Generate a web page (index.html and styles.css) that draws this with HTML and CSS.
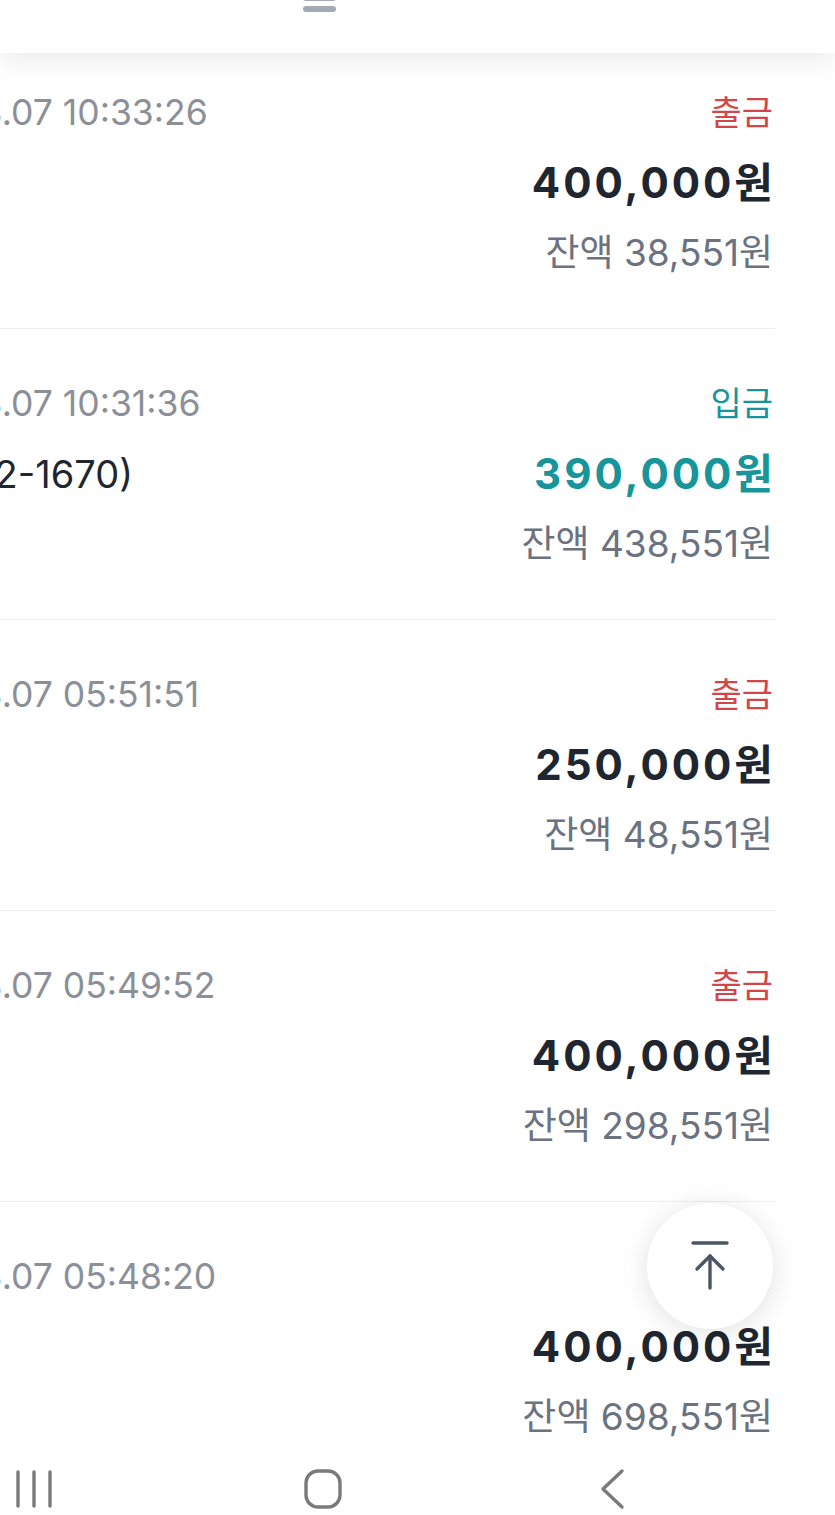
FILE: index.html
```html
<!DOCTYPE html>
<html lang="ko">
<head>
    <meta charset="UTF-8">
    <meta name="viewport" content="width=device-width, initial-scale=1.0">
    <title>거래내역</title>
    <link rel="stylesheet" href="styles.css">
</head>
<body>
    <div class="topbar">
        <div class="grabber">
            <span></span>
            <span></span>
        </div>
    </div>

    <div class="list">
        <div class="row">
            <div class="left">
                <div class="date">2024.03.07 10:33:26</div>
            </div>
            <div class="right">
                <div class="type out">출금</div>
                <div class="amount">400,000원</div>
                <div class="balance">잔액 38,551원</div>
            </div>
        </div>

        <div class="row">
            <div class="left">
                <div class="date">2024.03.07 10:31:36</div>
                <div class="name">(011-1112-1670)</div>
            </div>
            <div class="right">
                <div class="type in">입금</div>
                <div class="amount in">390,000원</div>
                <div class="balance">잔액 438,551원</div>
            </div>
        </div>

        <div class="row">
            <div class="left">
                <div class="date">2024.03.07 05:51:51</div>
            </div>
            <div class="right">
                <div class="type out">출금</div>
                <div class="amount">250,000원</div>
                <div class="balance">잔액 48,551원</div>
            </div>
        </div>

        <div class="row">
            <div class="left">
                <div class="date">2024.03.07 05:49:52</div>
            </div>
            <div class="right">
                <div class="type out">출금</div>
                <div class="amount">400,000원</div>
                <div class="balance">잔액 298,551원</div>
            </div>
        </div>

        <div class="row last">
            <div class="left">
                <div class="date">2024.03.07 05:48:20</div>
            </div>
            <div class="right">
                <div class="type out">출금</div>
                <div class="amount">400,000원</div>
                <div class="balance">잔액 698,551원</div>
            </div>
        </div>
    </div>

    <button class="to-top" aria-label="맨 위로">
        <svg width="40" height="52" viewBox="0 0 40 52" fill="none" stroke="#4b5563" stroke-width="3.4" stroke-linecap="round" stroke-linejoin="round">
            <path d="M3 3h34"/>
            <path d="M20 48V16"/>
            <path d="M7 29l13-13 13 13"/>
        </svg>
    </button>

    <div class="navbar">
        <svg class="nav-recent" width="44" height="40" viewBox="0 0 44 40" fill="none" stroke="#7a7a7a" stroke-width="3.4" stroke-linecap="round">
            <path d="M6 3v34M22 3v34M38 3v34"/>
        </svg>
        <svg class="nav-home" width="40" height="42" viewBox="0 0 40 42" fill="none" stroke="#7a7a7a" stroke-width="3.4">
            <rect x="3" y="3" width="34" height="36" rx="12"/>
        </svg>
        <svg class="nav-back" width="30" height="42" viewBox="0 0 30 42" fill="none" stroke="#7a7a7a" stroke-width="3.4" stroke-linecap="round" stroke-linejoin="round">
            <path d="M24 3L5 21l19 18"/>
        </svg>
    </div>
</body>
</html>
```

FILE: styles.css
```css
html, body {
    margin: 0;
    padding: 0;
    background: #fff;
    overflow: hidden;
}
body {
    width: 835px;
    height: 1515px;
    position: relative;
    font-family: Inter, "Noto Sans CJK KR", sans-serif;
    color: #1f2630;
}
.topbar {
    position: absolute;
    top: 0;
    left: 0;
    right: 0;
    height: 53px;
    background: #fff;
    box-shadow: 0 10px 24px rgba(0, 0, 0, 0.07);
    z-index: 2;
}
.grabber {
    position: absolute;
    left: 303px;
    top: -5px;
    width: 33px;
}
.grabber span {
    display: block;
    height: 6px;
    margin-bottom: 5px;
    border-radius: 3px;
    background: #a3aab6;
}
.list {
    margin-top: 38px;
    margin-left: -138px;
    width: 913px;
}
.row {
    display: flex;
    justify-content: space-between;
    padding: 40px 2px 40px 0;
    border-bottom: 1.5px solid #eceef1;
    height: 210px;
}
.row.last {
    border-bottom: none;
}
.left, .right {
    display: flex;
    flex-direction: column;
}
.right {
    align-items: flex-end;
}
.date, .name, .type, .amount, .balance {
    height: 70px;
    line-height: 70px;
    white-space: nowrap;
}
.date {
    font-size: 35.5px;
    color: #8b9098;
}
.name {
    font-size: 38px;
    color: #1f2630;
}
.type {
    font-size: 34px;
}
.type.out {
    color: #d2464a;
}
.type.in {
    color: #17959a;
}
.amount {
    font-size: 42px;
    font-weight: 700;
    letter-spacing: 3px;
    margin-right: -3px;
    color: #1f2630;
}
.amount.in {
    color: #17959a;
}
.balance {
    font-size: 37px;
    color: #6b7280;
}
.to-top {
    position: absolute;
    left: 647px;
    top: 1203px;
    width: 126px;
    height: 126px;
    border: none;
    border-radius: 50%;
    background: #fff;
    box-shadow: 0 4px 28px rgba(0, 0, 0, 0.12);
    display: flex;
    align-items: center;
    justify-content: center;
    padding: 0;
    z-index: 3;
}
.navbar {
    position: absolute;
    left: 0;
    right: 0;
    bottom: 0;
    height: 76px;
    background: #fff;
    z-index: 4;
}
.navbar svg {
    position: absolute;
}
.nav-recent {
    left: 12px;
    top: 30px;
}
.nav-home {
    left: 303px;
    top: 29px;
}
.nav-back {
    left: 598px;
    top: 29px;
}
```
